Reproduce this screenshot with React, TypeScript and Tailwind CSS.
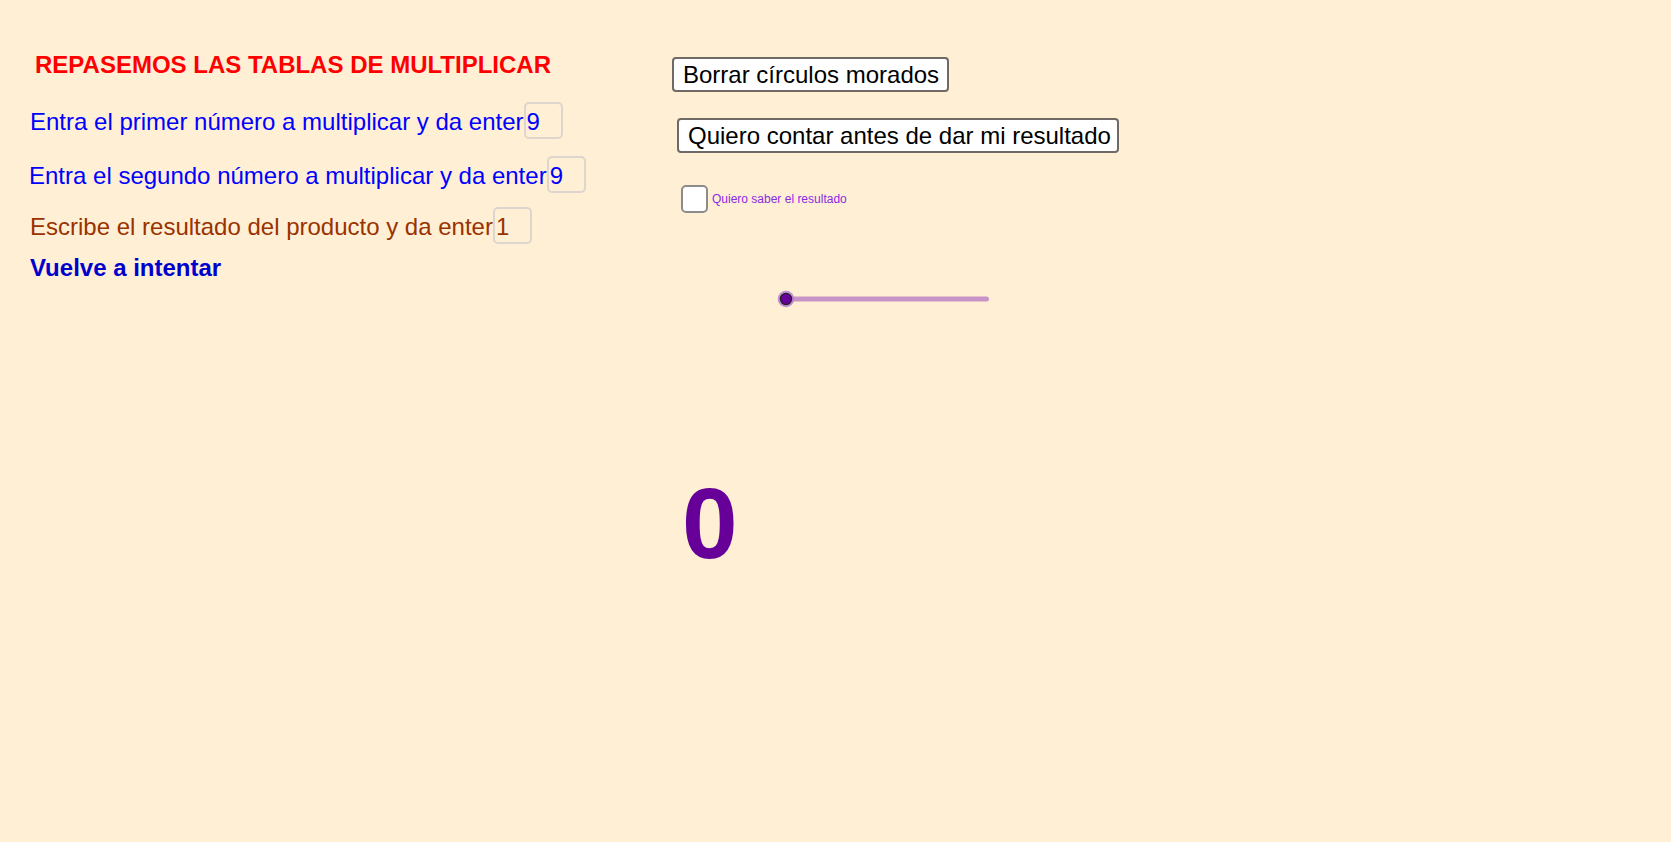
import React from "react";

const font = { fontFamily: '"Liberation Sans", Arial, sans-serif' };

function Field({ value, color }: { value: string; color: string }) {
  return (
    <div
      className={`box-border h-[37px] w-[39px] rounded-[5px] border-2 border-[#ddd6cc] pl-[1px] pt-[4px] text-[24px] leading-[28px] ${color}`}
    >
      {value}
    </div>
  );
}

export default function App() {
  return (
    <div
      className="min-h-[842px] w-full bg-[#ffefd5] flex flex-row"
      style={font}
    >
      {/* Left column */}
      <div className="flex flex-col pl-[30px] pt-[51px] w-[672px] shrink-0">
        <div className="ml-[5px] text-[24px] leading-[28px] font-bold text-[#ff0000]">
          REPASEMOS LAS TABLAS DE MULTIPLICAR
        </div>
        <div className="mt-[23px] flex flex-row items-baseline">
          <span className="text-[24px] leading-[28px] text-[#0000ff]">
            Entra el primer número a multiplicar y da enter
          </span>
          <Field value="9" color="text-[#0000ff]" />
        </div>
        <div className="mt-[17px] -ml-[1px] flex flex-row items-baseline">
          <span className="text-[24px] leading-[28px] text-[#0000ff]">
            Entra el segundo número a multiplicar y da enter
          </span>
          <Field value="9" color="text-[#0000ff]" />
        </div>
        <div className="mt-[14px] flex flex-row items-baseline">
          <span className="text-[24px] leading-[28px] text-[#993300]">
            Escribe el resultado del producto y da enter
          </span>
          <Field value="1" color="text-[#993300]" />
        </div>
        <div className="mt-[10px] text-[24px] leading-[28px] font-bold text-[#0000cc]">
          Vuelve a intentar
        </div>
      </div>

      {/* Right column */}
      <div className="flex flex-col pt-[57px]">
        <button className="box-border flex h-[35px] w-[277px] items-center rounded-[4px] border-2 border-[#6f6a65] bg-white pl-[9px] text-left text-[24px] leading-[28px] text-black">
          Borrar círculos morados
        </button>
        <button className="ml-[5px] mt-[26px] box-border flex h-[35px] w-[442px] items-center rounded-[4px] border-2 border-[#6f6a65] bg-white pl-[9px] text-left text-[24px] leading-[28px] text-black">
          Quiero contar antes de dar mi resultado
        </button>
        <div className="ml-[9px] mt-[32px] flex flex-row items-center">
          <div className="box-border h-[28px] w-[27px] rounded-[5px] border-2 border-[#8c8c8c] bg-white" />
          <span className="ml-[4px] text-[12px] leading-[14px] text-[#8a2be2]">
            Quiero saber el resultado
          </span>
        </div>
        <div className="ml-[105px] mt-[77px]">
          <svg width="216" height="18" viewBox="0 0 216 18">
            <line
              x1="9"
              y1="9"
              x2="209.5"
              y2="9"
              stroke="#c893c6"
              strokeWidth="5"
              strokeLinecap="round"
            />
            <circle cx="9" cy="9" r="8.3" fill="#b57fd3" opacity="0.85" />
            <circle
              cx="9"
              cy="9"
              r="5.6"
              fill="#660099"
              stroke="#222"
              strokeWidth="1.2"
            />
          </svg>
        </div>
        <div className="ml-[10px] mt-[165px] text-[100px] leading-[100px] font-bold text-[#660099]">
          0
        </div>
      </div>
    </div>
  );
}
